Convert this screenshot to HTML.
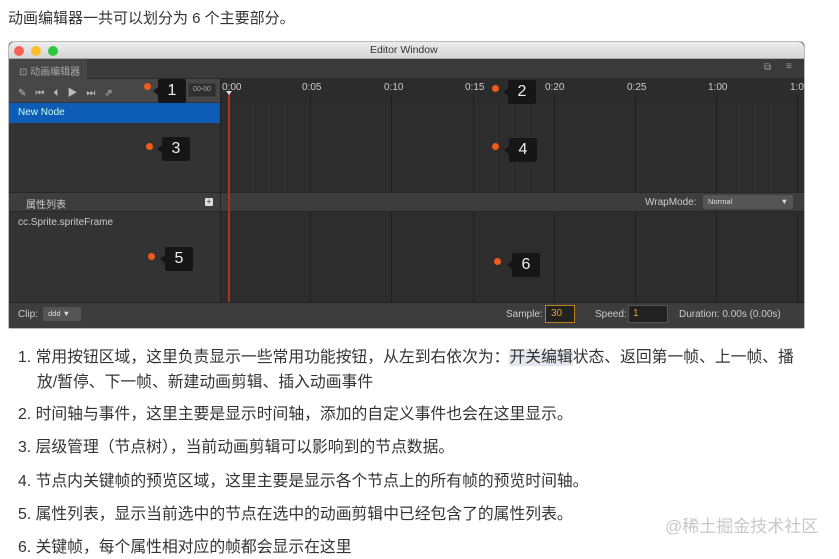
<!DOCTYPE html>
<html><head><meta charset="utf-8"><style>
*{margin:0;padding:0;box-sizing:border-box}
body{width:839px;height:559px;background:#fff;position:relative;overflow:hidden;font-family:"Liberation Sans","Noto Sans CJK SC",sans-serif}
.a{position:absolute}
.t{color:#333;font-size:15.8px;white-space:nowrap}
.w{font-size:10px;color:#ccc;white-space:nowrap}
.dot{position:absolute;width:7px;height:7px;border-radius:50%;background:#f05a1a}
.lab{position:absolute;width:28px;height:24px;background:#161616;color:#eee;font-size:16px;text-align:center;line-height:24px;border-radius:2px}
.lab:before{content:"";position:absolute;left:-5px;top:8px;border:4px solid transparent;border-right:5px solid #161616;border-left:0}
.vl{position:absolute;width:1px;background:#1f1f1f}
.vs{position:absolute;width:1px;background:#323232}
.tk{position:absolute;top:82px;font-size:10px;color:#ccc}
</style></head><body>
<div class="a t" style="left:8px;top:7px;font-size:15px">动画编辑器一共可以划分为 6 个主要部分。</div>

<div class="a" style="left:8px;top:41px;width:797px;height:288px;background:#2f2f2f;border-radius:5px 5px 2px 2px;overflow:hidden;border:1px solid #bbb">
</div>
<div class="a" style="left:9px;top:42px;width:795px;height:17px;background:linear-gradient(#ececec,#d6d6d6);border-radius:5px 5px 0 0;border-bottom:1px solid #aaa"></div>
<div class="a" style="left:14px;top:46px;width:10px;height:10px;border-radius:50%;background:#fc5f57"></div>
<div class="a" style="left:31px;top:46px;width:10px;height:10px;border-radius:50%;background:#fdbc2e"></div>
<div class="a" style="left:48px;top:46px;width:10px;height:10px;border-radius:50%;background:#2ac840"></div>
<div class="a" style="left:370px;top:44px;font-size:10.5px;color:#333">Editor Window</div>
<div class="a" style="left:9px;top:59px;width:795px;height:20px;background:#3a3a3a;border-bottom:1px solid #2a2a2a"></div>
<div class="a" style="left:9px;top:59px;width:78px;height:20px;background:#464646"></div>
<div class="a w" style="left:19px;top:63px;color:#aaa">⊡ 动画编辑器</div>
<div class="a w" style="left:764px;top:62px;color:#999">⧉</div>
<div class="a w" style="left:786px;top:61px;color:#999">≡</div>
<div class="a" style="left:9px;top:79px;width:211px;height:23px;background:#474747"></div>
<div class="a w" style="left:18px;top:84px;color:#bbb;letter-spacing:9px">✎⏮⏴▶⏭⇗</div>
<div class="a" style="left:188px;top:83px;width:28px;height:14px;background:#2f2f2f;border:1px solid #3a3a3a;font-size:7px;color:#aaa;text-align:center;line-height:12px">00-00</div>
<div class="a" style="left:220px;top:79px;width:584px;height:23px;background:#2c2c2c"></div>
<div class="a" style="left:9px;top:102px;width:211px;height:90px;background:#333"></div>
<div class="a" style="left:9px;top:103px;width:211px;height:20px;background:#0d5cb6"></div>
<div class="a w" style="left:18px;top:107px;color:#cfe">New Node</div>
<div class="a" style="left:220px;top:102px;width:584px;height:90px;background:#2d2d2d"></div>
<div class="a" style="left:9px;top:192px;width:795px;height:20px;background:#3d3d3d;border-top:1px solid #262626;border-bottom:1px solid #262626"></div>
<div class="a w" style="left:26px;top:196px;color:#ccc">属性列表</div>
<div class="a" style="left:205px;top:198px;width:8px;height:8px;background:#ddd;border-radius:1px;font-size:8px;line-height:8px;text-align:center;color:#333">+</div>
<div class="a w" style="left:645px;top:197px">WrapMode:</div>
<div class="a" style="left:703px;top:195px;width:90px;height:14px;background:#555;border-radius:2px;font-size:7.5px;color:#ddd;line-height:14px;padding-left:5px">Normal<span style="position:absolute;right:5px">▼</span></div>
<div class="a" style="left:9px;top:212px;width:211px;height:90px;background:#333"></div>
<div class="a w" style="left:18px;top:217px">cc.Sprite.spriteFrame</div>
<div class="a" style="left:220px;top:212px;width:584px;height:90px;background:#2d2d2d"></div>
<div class="vl" style="left:310px;top:95px;height:97px"></div><div class="vl" style="left:391px;top:95px;height:97px"></div><div class="vl" style="left:473px;top:95px;height:97px"></div><div class="vl" style="left:554px;top:95px;height:97px"></div><div class="vl" style="left:635px;top:95px;height:97px"></div><div class="vl" style="left:716px;top:95px;height:97px"></div><div class="vl" style="left:797px;top:95px;height:97px"></div>
<div class="vl" style="left:310px;top:212px;height:90px"></div><div class="vl" style="left:391px;top:212px;height:90px"></div><div class="vl" style="left:473px;top:212px;height:90px"></div><div class="vl" style="left:554px;top:212px;height:90px"></div><div class="vl" style="left:635px;top:212px;height:90px"></div><div class="vl" style="left:716px;top:212px;height:90px"></div><div class="vl" style="left:797px;top:212px;height:90px"></div>
<div class="vs" style="left:252px;top:102px;height:90px"></div><div class="vs" style="left:268px;top:102px;height:90px"></div><div class="vs" style="left:284px;top:102px;height:90px"></div><div class="vs" style="left:333px;top:102px;height:90px"></div><div class="vs" style="left:349px;top:102px;height:90px"></div><div class="vs" style="left:365px;top:102px;height:90px"></div><div class="vs" style="left:414px;top:102px;height:90px"></div><div class="vs" style="left:430px;top:102px;height:90px"></div><div class="vs" style="left:446px;top:102px;height:90px"></div><div class="vs" style="left:496px;top:102px;height:90px"></div><div class="vs" style="left:512px;top:102px;height:90px"></div><div class="vs" style="left:528px;top:102px;height:90px"></div><div class="vs" style="left:577px;top:102px;height:90px"></div><div class="vs" style="left:593px;top:102px;height:90px"></div><div class="vs" style="left:609px;top:102px;height:90px"></div><div class="vs" style="left:658px;top:102px;height:90px"></div><div class="vs" style="left:674px;top:102px;height:90px"></div><div class="vs" style="left:690px;top:102px;height:90px"></div><div class="vs" style="left:739px;top:102px;height:90px"></div><div class="vs" style="left:755px;top:102px;height:90px"></div><div class="vs" style="left:771px;top:102px;height:90px"></div>
<div class="a" style="left:220px;top:79px;width:1px;height:223px;background:#222"></div>
<div class="a" style="left:228px;top:92px;width:2px;height:210px;background:#b0321c"></div>
<div class="a" style="left:226px;top:91px;border:3px solid transparent;border-top:4px solid #ddd"></div>
<div class="tk" style="left:222px">0:00</div><div class="tk" style="left:302px">0:05</div><div class="tk" style="left:384px">0:10</div><div class="tk" style="left:465px">0:15</div><div class="tk" style="left:545px">0:20</div><div class="tk" style="left:627px">0:25</div><div class="tk" style="left:708px">1:00</div><div class="tk" style="left:790px">1:0</div>
<div class="a" style="left:9px;top:302px;width:795px;height:26px;background:#3d3d3d;border-top:1px solid #222"></div>
<div class="a w" style="left:18px;top:309px">Clip:</div>
<div class="a" style="left:43px;top:307px;width:38px;height:14px;background:#555;border-radius:2px;font-size:7.5px;color:#ddd;line-height:14px;padding-left:5px">ddd ▼</div>
<div class="a w" style="left:506px;top:309px">Sample:</div>
<div class="a" style="left:545px;top:305px;width:30px;height:18px;background:#222;border:1px solid #c08020;font-size:10px;color:#f0a020;line-height:16px;padding-left:5px">30</div>
<div class="a w" style="left:595px;top:309px">Speed:</div>
<div class="a" style="left:628px;top:305px;width:40px;height:18px;background:#222;border:1px solid #555;font-size:10px;color:#f0a020;line-height:16px;padding-left:4px">1</div>
<div class="a w" style="left:679px;top:309px">Duration: 0.00s (0.00s)</div>
<div class="dot" style="left:144px;top:83px"></div><div class="lab" style="left:158px;top:79px">1</div>
<div class="dot" style="left:492px;top:85px"></div><div class="lab" style="left:508px;top:80px">2</div>
<div class="dot" style="left:146px;top:143px"></div><div class="lab" style="left:162px;top:137px">3</div>
<div class="dot" style="left:492px;top:143px"></div><div class="lab" style="left:509px;top:138px">4</div>
<div class="dot" style="left:148px;top:253px"></div><div class="lab" style="left:165px;top:247px">5</div>
<div class="dot" style="left:494px;top:258px"></div><div class="lab" style="left:512px;top:253px">6</div>

<div class="a t" style="left:18px;top:344px">1. 常用按钮区域，这里负责显示一些常用功能按钮，从左到右依次为：<span style="background:#e4e8ee">开关编辑</span>状态、返回第一帧、上一帧、播</div>
<div class="a t" style="left:37px;top:369px">放/暂停、下一帧、新建动画剪辑、插入动画事件</div>
<div class="a t" style="left:18px;top:401px">2. 时间轴与事件，这里主要是显示时间轴，添加的自定义事件也会在这里显示。</div>
<div class="a t" style="left:18px;top:434px">3. 层级管理（节点树），当前动画剪辑可以影响到的节点数据。</div>
<div class="a t" style="left:18px;top:468px">4. 节点内关键帧的预览区域，这里主要是显示各个节点上的所有帧的预览时间轴。</div>
<div class="a t" style="left:18px;top:501px">5. 属性列表，显示当前选中的节点在选中的动画剪辑中已经包含了的属性列表。</div>
<div class="a t" style="left:18px;top:534px">6. 关键帧，每个属性相对应的帧都会显示在这里</div>
<div class="a" style="left:665px;top:512px;font-size:17px;color:#c8c8c8;white-space:nowrap">@稀土掘金技术社区</div>
</body></html>
